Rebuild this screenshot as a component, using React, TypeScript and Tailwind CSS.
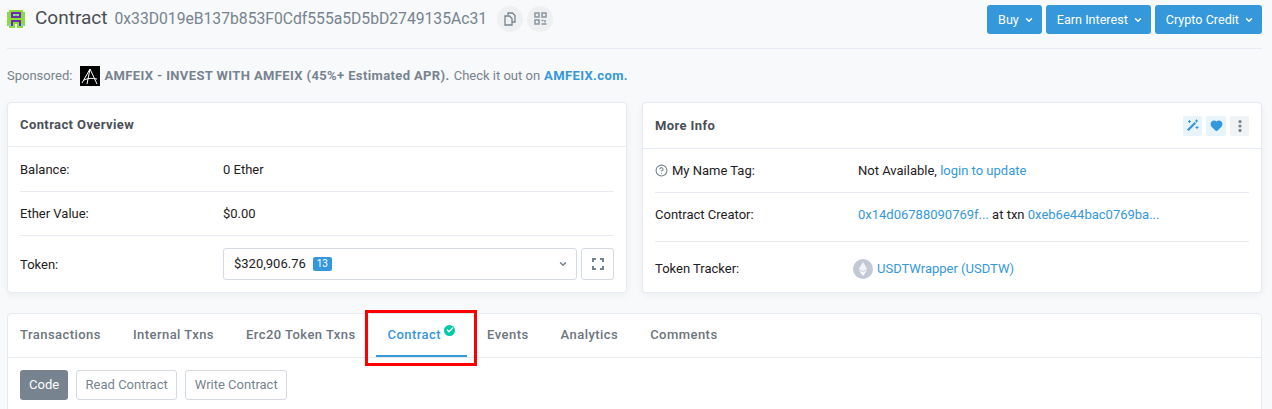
import { ChevronDown, Heart, HelpCircle, Check } from 'lucide-react';

const font = "font-['Roboto',sans-serif]";

const invaderPurple = [
    'M2 1h5v1H2z',
    'M2 2h1v1H2zM6 2h1v1H6z',
    'M2 3h5v1H2z',
    'M2 5h5v1H2z',
    'M2 6h1v1H2zM6 6h1v1H6z',
    'M2 7h1v1H2zM6 7h1v1H6z',
].join('');

const Invader = () => (
    <svg width="18" height="18" viewBox="0 0 9 9" shapeRendering="crispEdges">
        <path d="M1 0h7v1h1v7H8v1H1V8H0V1h1z" fill="#8ddc3f" />
        <path d={invaderPurple} fill="#6c2fa8" />
        <path d="M3 2h1v1H3zM5 2h1v1H5zM1 7h1v1H1zM7 7h1v1H7z" fill="#7fd8d8" />
        <path d="M4 7h1v2H4z" fill="#f8f9fa" />
    </svg>
);

const CopyIcon = () => (
    <svg width="12" height="14" viewBox="0 0 12 14" fill="none" stroke="#77838f" strokeWidth="1.3">
        <path d="M4 3V1h4.5L11 3.5V10H8" />
        <path d="M1 4h4.5L8 6.5V13H1z" />
    </svg>
);

const QrIcon = () => (
    <svg width="13" height="13" viewBox="0 0 13 13" fill="none" stroke="#8a95a0" strokeWidth="1.5">
        <path d="M1 1h4v4H1zM8 1h4v4H8zM1 8h4v4H1z" />
        <path d="M7.5 8.5h2M11 8v2.5M7.5 12h5" />
    </svg>
);

const ExpandIcon = () => (
    <svg width="12" height="12" viewBox="0 0 12 12" fill="none" stroke="#77838f" strokeWidth="2">
        <path d="M1 4V1h3M8 1h3v3M11 8v3H8M4 11H1V8" />
    </svg>
);

const WandIcon = () => (
    <svg width="13" height="13" viewBox="0 0 13 13" fill="#3498db">
        <path d="M1 10.5L8.5 3l1.6 1.6L2.6 12.1z" />
        <path d="M3 1h1v1h1v1H4v1H3V3H2V2h1zM10 .5h1v1h1v1h-1v1h-1v-1H9v-1h1zM10.5 7h1v1h1v1h-1v1h-1V9h-1V8h1z" />
    </svg>
);

const DotsIcon = () => (
    <svg width="4" height="12" viewBox="0 0 4 12" fill="#77838f">
        <circle cx="2" cy="1.6" r="1.6" />
        <circle cx="2" cy="6" r="1.6" />
        <circle cx="2" cy="10.4" r="1.6" />
    </svg>
);

const Row = ({ label, children }: { label: string; children: React.ReactNode }) => (
    <div className="flex items-center h-[44px] border-b border-[#e7eaf3] first:h-[45px] first:pt-[1px]">
        <div className="w-[203px] shrink-0">{label}</div>
        <div>{children}</div>
    </div>
);

const NavBtn = ({ label }: { label: string }) => (
    <button className="h-[29px] pl-[11px] pr-[8px] pt-[1px] bg-[#3498db] rounded-[3px] text-white text-[12.6px] flex items-center gap-[5px]">
        {label}
        <ChevronDown size={10} strokeWidth={3.5} />
    </button>
);

const Tab = ({ label, active }: { label: string; active?: boolean }) => (
    <div className={`h-full px-[12px] pb-[2px] flex items-center relative font-medium tracking-[0.45px] ${active ? 'text-[#3498db]' : 'text-[#6c757e]'}`}>
        {label}
        {active && (
            <>
                <span className="ml-[3px] mb-[9px] w-[11px] h-[11px] rounded-full bg-[#00c9a7] flex items-center justify-center">
                    <Check size={8} strokeWidth={4} className="text-white" />
                </span>
                <span className="absolute left-0 right-0 bottom-0 h-[2px] bg-[#3498db]" />
            </>
        )}
    </div>
);

const SubBtn = ({ label }: { label: string }) => (
    <span className="h-[30px] px-[8.5px] rounded-[3px] border border-[#d5dae2] text-[#77838f] flex items-center">{label}</span>
);

export default function App() {
    return (
        <div className={`${font} relative w-[1272px] h-[409px] overflow-hidden bg-[#f8f9fa] text-[13px] text-[#1e2022] pl-[7px] pr-[10px]`}>
            <div className="h-[50px] -mt-[1px] pb-[10px] flex items-center justify-between border-b border-[#e7eaf3]">
                <div className="flex items-center">
                    <Invader />
                    <span className="ml-[10px] text-[19px] text-[#4a4f55]">Contract</span>
                    <span className="ml-[7px] text-[15.7px] text-[#77838f]">0x33D019eB137b853F0Cdf555a5D5bD2749135Ac31</span>
                    <span className="ml-[10px] w-[26px] h-[26px] rounded-full bg-[#eff0f1] flex items-center justify-center">
                        <CopyIcon />
                    </span>
                    <span className="ml-[4px] w-[26px] h-[26px] rounded-full bg-[#eff0f1] flex items-center justify-center">
                        <QrIcon />
                    </span>
                </div>
                <div className="flex gap-[4px] mt-[2px]">
                    <NavBtn label="Buy" />
                    <NavBtn label="Earn Interest" />
                    <NavBtn label="Crypto Credit" />
                </div>
            </div>

            <div className="h-[53px] flex items-center text-[#77838f]">
                <span>Sponsored:</span>
                <svg className="ml-[8px] mr-[4px]" width="20" height="20" viewBox="0 0 20 20">
                    <rect width="20" height="20" fill="#000" />
                    <path d="M2 17L10 3l7 15M4 14c4-2 8-2 13-1M10 3l-3 15" fill="none" stroke="#fff" strokeWidth="1" />
                </svg>
                <span className="font-bold tracking-[0.38px]">AMFEIX - INVEST WITH AMFEIX (45%+ Estimated APR).</span>
                <span className="ml-[4px]">Check it out on</span>
                <span className="ml-[4px] font-bold tracking-[0.38px] text-[#3498db]">AMFEIX.com.</span>
            </div>

            <div className="flex gap-[15px]">
                <section className="w-[620px] h-[191px] bg-white rounded-[4px] border border-[#e7eaf3] shadow-[0_2px_6px_rgba(189,197,209,0.2)]">
                    <div className="h-[44px] px-[12px] flex items-center border-b border-[#e7eaf3] font-bold tracking-[0.4px] text-[#4a4f55]">Contract Overview</div>
                    <div className="px-[12px]">
                        <Row label="Balance:">0 Ether</Row>
                        <Row label="Ether Value:">$0.00</Row>
                        <div className="flex items-center h-[56px]">
                            <div className="w-[203px] shrink-0 pt-[2px]">Token:</div>
                            <div className="w-[354px] h-[32px] pl-[10px] pr-[8px] rounded-[3px] border border-[#d5dae2] flex items-center justify-between">
                                <span className="flex items-center">
                                    $320,906.76
                                    <span className="ml-[7px] w-[19px] h-[14px] text-center rounded-[2px] bg-[#3498db] text-white text-[10px] leading-[14px]">13</span>
                                </span>
                                <ChevronDown size={10} strokeWidth={3.5} className="text-[#77838f]" />
                            </div>
                            <div className="ml-[4px] w-[33px] h-[32px] rounded-[3px] border border-[#d5dae2] flex items-center justify-center">
                                <ExpandIcon />
                            </div>
                        </div>
                    </div>
                </section>

                <section className="w-[620px] h-[191px] bg-white rounded-[4px] border border-[#e7eaf3] shadow-[0_2px_6px_rgba(189,197,209,0.2)]">
                    <div className="h-[46px] px-[12px] flex items-center justify-between border-b border-[#e7eaf3] font-bold tracking-[0.4px] text-[#4a4f55]">
                        More Info
                        <div className="flex gap-[4px]">
                            <span className="w-[19px] h-[20px] rounded-[2px] bg-[#e8f4fb] flex items-center justify-center"><WandIcon /></span>
                            <span className="w-[20px] h-[20px] rounded-[2px] bg-[#e8f4fb] flex items-center justify-center"><Heart size={13} fill="#3498db" className="text-[#3498db]" /></span>
                            <span className="w-[19px] h-[20px] rounded-[2px] bg-[#f1f2f4] flex items-center justify-center"><DotsIcon /></span>
                        </div>
                    </div>
                    <div className="px-[12px]">
                        <div className="flex items-center h-[44px] border-b border-[#e7eaf3]">
                            <div className="w-[203px] shrink-0 flex items-center gap-[4px]">
                                <HelpCircle size={13} className="text-[#77838f]" />
                                My Name Tag:
                            </div>
                            <div>Not Available, <span className="text-[#3498db]">login to update</span></div>
                        </div>
                        <div className="flex items-center h-[49px] pb-[5px] border-b border-[#e7eaf3]">
                            <div className="w-[203px] shrink-0">Contract Creator:</div>
                            <div><span className="text-[#3498db]">0x14d06788090769f...</span> at txn <span className="text-[#3498db]">0xeb6e44bac0769ba...</span></div>
                        </div>
                        <div className="flex items-center h-[50px] pt-[3px]">
                            <div className="w-[198px] shrink-0">Token Tracker:</div>
                            <div className="flex items-center gap-[4px] text-[#3498db]">
                                <svg width="20" height="20" viewBox="0 0 20 20">
                                    <circle cx="10" cy="10" r="10" fill="#c3c9d4" />
                                    <path d="M10 3l4.2 7L10 12.5 5.8 10z" fill="#f2f3f6" />
                                    <path d="M10 13.5l4.2-2.5L10 17l-4.2-6z" fill="#fff" />
                                </svg>
                                USDTWrapper (USDTW)
                            </div>
                        </div>
                    </div>
                </section>
            </div>

            <section className="mt-[20px] h-[110px] bg-white rounded-t-[4px] border border-[#e7eaf3]">
                <div className="h-[44px] flex items-center gap-[8px] border-b border-[#e7eaf3]">
                    <Tab label="Transactions" />
                    <Tab label="Internal Txns" />
                    <Tab label="Erc20 Token Txns" />
                    <Tab label="Contract" active />
                    <Tab label="Events" />
                    <Tab label="Analytics" />
                    <Tab label="Comments" />
                </div>
                <div className="pt-[12px] pl-[12px] flex gap-[8px]">
                    <span className="h-[30px] px-[9px] rounded-[3px] bg-[#77838f] text-white flex items-center">Code</span>
                    <SubBtn label="Read Contract" />
                    <SubBtn label="Write Contract" />
                </div>
            </section>

            <div className="absolute left-[365px] top-[310px] w-[112px] h-[56px] border-[3px] border-[#ff0000]" />
        </div>
    );
}
